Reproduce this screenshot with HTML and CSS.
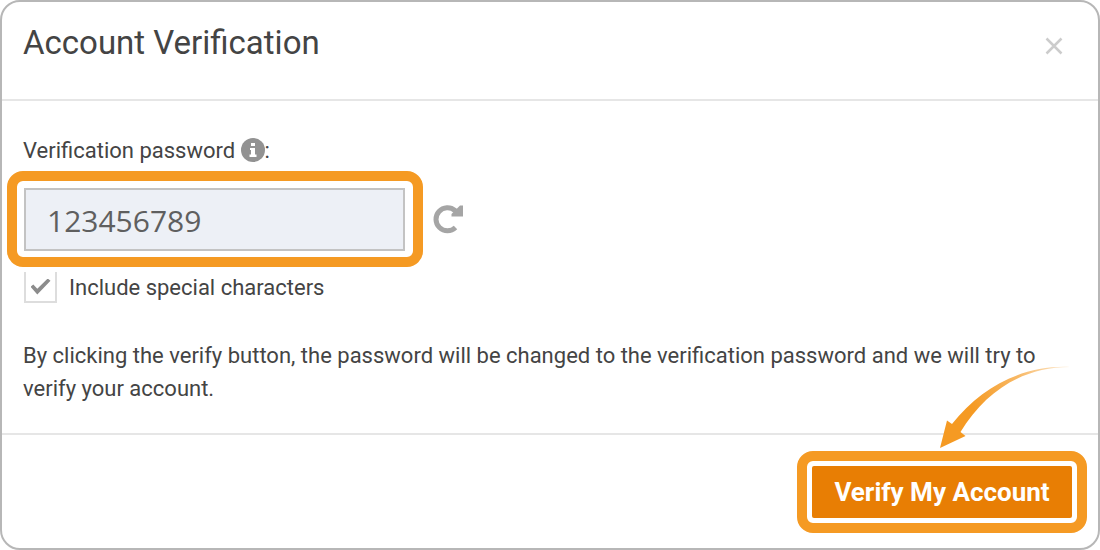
FILE: index.html
```html
<!DOCTYPE html>
<html lang="en">
<head>
<meta charset="utf-8">
<title>Account Verification</title>
<link rel="stylesheet" href="styles.css">
</head>
<body>
<main class="dialog" role="dialog" aria-labelledby="dialog-title">
  <header class="dialog-header">
    <h1 class="dialog-title" id="dialog-title">Account Verification</h1>
    <button class="icon-button close-button" type="button" aria-label="Close">
      <svg class="close-icon" viewBox="0 0 18 18"><path d="M1.5 1.5 16.5 16.5M16.5 1.5 1.5 16.5"/></svg>
    </button>
  </header>
  <section class="dialog-body">
    <label class="field-label" for="password">Verification password
      <svg class="info-icon" viewBox="0 0 24 24"><circle cx="12" cy="12" r="12"/><path d="M10 5h4v3h-4zM9 10h5v6.500h1.500V19h-7v-2.500H10V12H9z"/></svg>:</label>
    <div class="field-row">
      <div class="highlight field-highlight">
        <input class="password-input" id="password" type="text" value="123456789">
      </div>
      <button class="icon-button" type="button" aria-label="Generate new password">
        <svg class="refresh-icon" viewBox="0 0 30 30"><path class="refresh-arc" d="M22.500 23.500A11.500 11.500 0 1 1 22 6.500L24 9"/><path class="refresh-head" d="M30 1.500V12.500H18.500V10L27 1.500z"/></svg>
      </button>
    </div>
    <label class="check-row">
      <input class="checkbox" type="checkbox" checked>
      <span>Include special characters</span>
    </label>
    <p class="note">By clicking the verify button, the password will be changed to the verification password and we will try to verify your account.</p>
  </section>
  <footer class="dialog-footer">
    <div class="highlight button-highlight">
      <button class="verify-button" type="button">Verify My Account</button>
      <svg class="arrow" viewBox="0 0 132 82" aria-hidden="true">
        <defs>
          <linearGradient id="arrow-fade" gradientUnits="userSpaceOnUse" x1="132" y1="0" x2="34" y2="44">
            <stop offset="0" stop-color="#f59a23" stop-opacity="0.200"/>
            <stop offset="0.5" stop-color="#f59a23" stop-opacity="0.700"/>
            <stop offset="1" stop-color="#f59a23"/>
          </linearGradient>
        </defs>
        <path fill="url(#arrow-fade)" d="M130 1C84-1 42 20 12 58L7 54.500 0 82 25.500 70 20.500 66C46 24 84 1 130 1z"/>
      </svg>
    </div>
  </footer>
</main>
</body>
</html>
```
FILE: styles.css
```css
* {
  box-sizing: border-box;
}

body {
  margin: 0;
  background: #fff;
  color: #444;
  font: 22px/33px Roboto, sans-serif;
}

.dialog {
  display: flex;
  flex-direction: column;
  min-height: 100vh;
  border: 2px solid #b7b7b7;
  border-radius: 20px;
  background: #fff;
}

.dialog-header {
  display: flex;
  justify-content: space-between;
  align-items: center;
  padding: 19px 35px 34px 21px;
  border-bottom: 2px solid #e6e6e6;
}

.dialog-title {
  margin: 0;
  font-size: 33px;
  font-weight: 400;
  line-height: 44px;
}

.icon-button {
  display: flex;
  padding: 0;
  border: 0;
  background: none;
}

.close-button {
  padding-top: 6px;
}

.close-icon {
  width: 18px;
  height: 18px;
  fill: none;
  stroke: #ccc;
  stroke-width: 2.5;
}

.dialog-body {
  flex: 1;
  padding: 33px 21px 28px;
}

.field-label {
  display: block;
  margin-bottom: 4px;
}

.info-icon {
  width: 24px;
  height: 24px;
  vertical-align: -4px;
  fill: #929292;
}

.info-icon path {
  fill: #fff;
}

.field-row {
  display: flex;
  align-items: center;
  gap: 10px;
  margin-left: -16px;
}

.highlight {
  position: relative;
  border: 10px solid #f59a23;
  background: #fff;
}

.field-highlight {
  width: 416px;
  padding: 7px 8px 6px 7px;
  border-radius: 16px;
}

.password-input {
  display: block;
  width: 100%;
  height: 63px;
  padding: 2px 21px 0;
  border: 2px solid #c3c3c3;
  border-radius: 0;
  background: #edf0f6;
  color: #5f5f5f;
  font: 30px "Open Sans", "Noto Sans", sans-serif;
}

.refresh-icon {
  width: 30px;
  height: 30px;
}

.refresh-arc {
  fill: none;
  stroke: #a5a5a5;
  stroke-width: 5;
}

.refresh-head {
  fill: #a5a5a5;
}

.check-row {
  display: flex;
  align-items: center;
  gap: 12px;
  margin-top: 4px;
}

.checkbox {
  display: grid;
  place-items: center;
  appearance: none;
  width: 33px;
  height: 31px;
  margin: 0 0 0 1px;
  border: 2px solid #ddd;
  border-top: 0;
}

.checkbox:checked::before {
  content: "";
  width: 20px;
  height: 16px;
  background: #8c8c8c;
  clip-path: polygon(0 52%, 14% 38%, 34% 64%, 86% 0, 100% 14%, 34% 100%);
}

.note {
  margin: 35px 0 0;
}

.dialog-footer {
  display: flex;
  justify-content: flex-end;
  padding: 16px 11px 15px;
  border-top: 2px solid #e6e6e6;
}

.button-highlight {
  padding: 5px;
  border-radius: 16px;
}

.verify-button {
  display: block;
  width: 260px;
  height: 52px;
  padding: 0;
  border: 0;
  border-radius: 2px;
  background: #e87e04;
  color: #fff;
  font: 700 26px Roboto, sans-serif;
}

.arrow {
  position: absolute;
  right: 5px;
  bottom: 75px;
  width: 132px;
  height: 82px;
  pointer-events: none;
}
```
